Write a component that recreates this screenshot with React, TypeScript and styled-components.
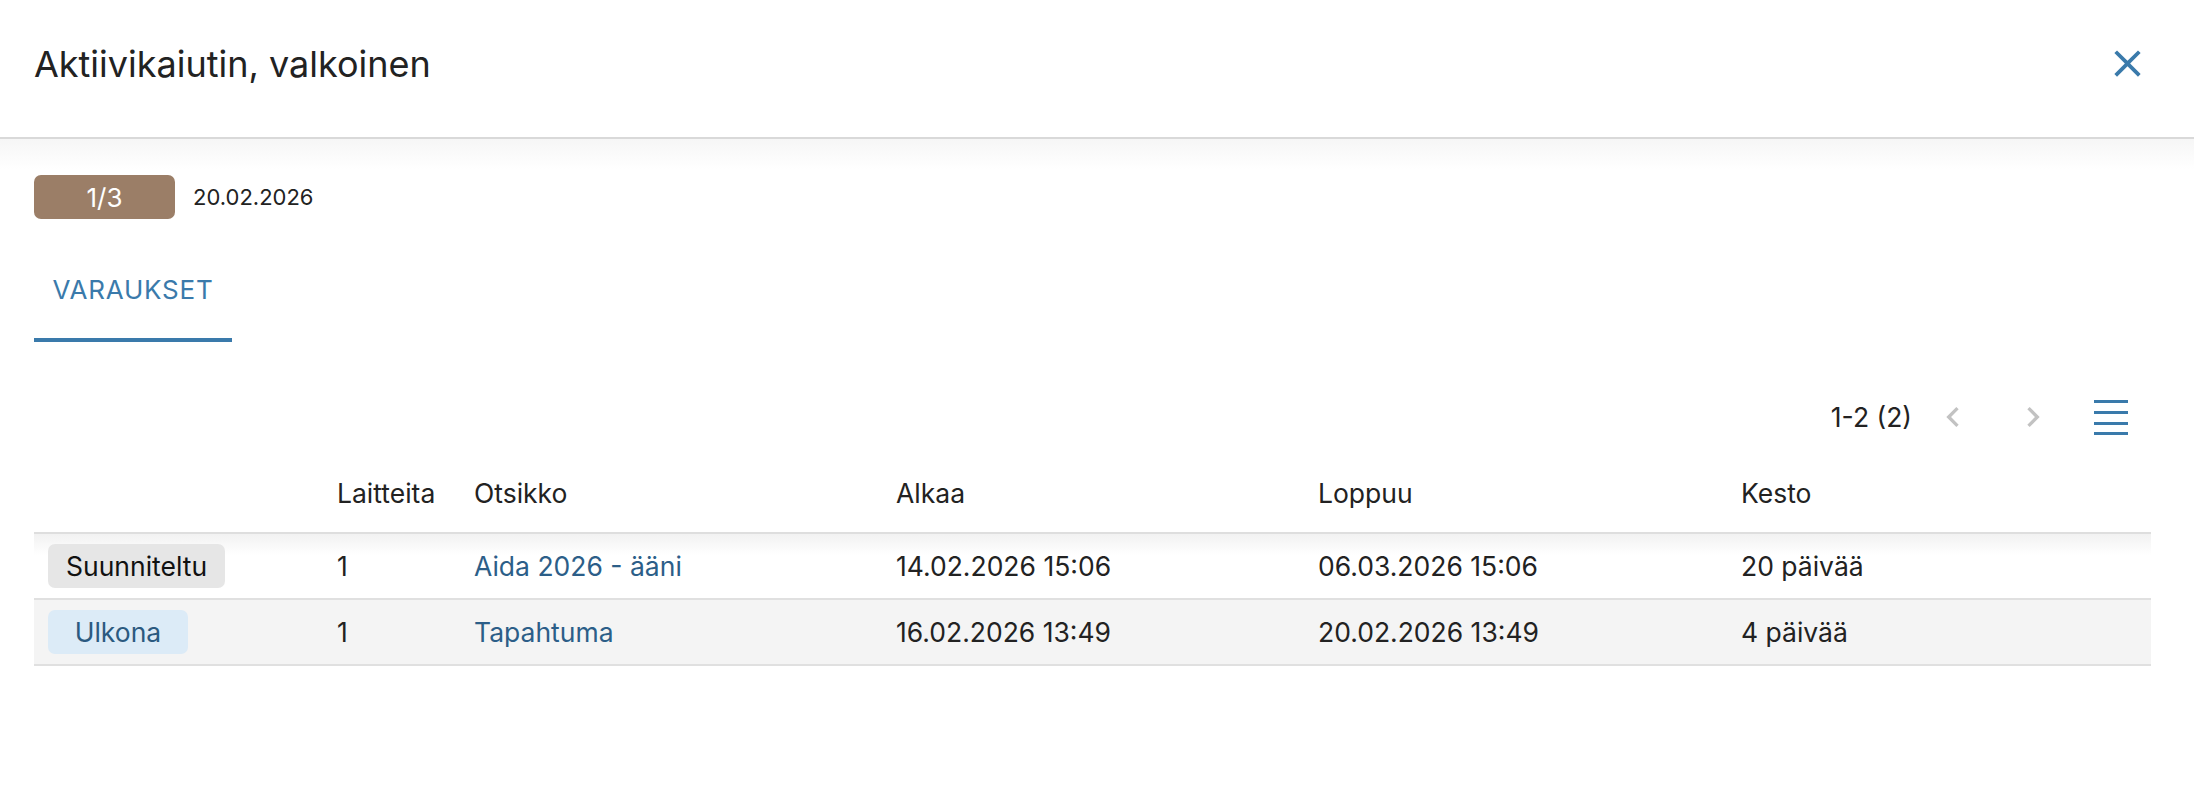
import styled, { createGlobalStyle } from 'styled-components';

const GlobalStyle = createGlobalStyle`
    body {
        margin: 0;
        background: #ffffff;
        font-family: Inter, "Noto Sans", sans-serif;
        color: #222222;
    }
`;

const Page = styled.div`
    width: 100%;
    min-height: 810px;
    background: #ffffff;
`;

const Header = styled.header`
    display: flex;
    align-items: center;
    justify-content: space-between;
    box-sizing: border-box;
    height: 139px;
    padding: 0 43px 10px 34px;
    border-bottom: 2px solid #d9d9d9;
`;

const Title = styled.h1`
    margin: 0;
    font-size: 36px;
    font-weight: 400;
    color: #222222;
`;

const IconButton = styled.button<{ $size: number }>`
    display: flex;
    align-items: center;
    justify-content: center;
    width: ${p => p.$size}px;
    height: ${p => p.$size}px;
    padding: 0;
    border: none;
    background: transparent;
    cursor: pointer;
`;

const Body = styled.main`
    padding: 0 43px 0 34px;
    background: linear-gradient(#f6f6f6, #ffffff 30px) top / 100% 30px no-repeat;
`;

const MetaRow = styled.div`
    display: flex;
    align-items: center;
    gap: 18px;
    padding-top: 36px;
`;

const CountBadge = styled.span`
    display: inline-flex;
    align-items: center;
    justify-content: center;
    width: 141px;
    height: 44px;
    border-radius: 7px;
    background: #9b7e67;
    color: #ffffff;
    font-size: 26px;
`;

const DateText = styled.span`
    font-size: 22px;
    color: #222222;
`;

const Tabs = styled.div`
    display: flex;
    margin-top: 18px;
`;

const Tab = styled.button<{ $active?: boolean }>`
    display: flex;
    align-items: center;
    justify-content: center;
    box-sizing: border-box;
    width: 198px;
    height: 105px;
    padding: 4px 0 0;
    border: none;
    border-bottom: 4px solid ${p => (p.$active ? '#3a7aab' : 'transparent')};
    background: transparent;
    font-family: Inter, "Noto Sans", sans-serif;
    font-size: 26px;
    letter-spacing: 0.03em;
    text-transform: uppercase;
    color: ${p => (p.$active ? '#3a7aab' : '#666666')};
`;

const Toolbar = styled.div`
    display: flex;
    align-items: center;
    justify-content: flex-end;
    height: 60px;
    margin-top: 45px;
    padding-right: 12px;
`;

const RangeText = styled.span`
    font-size: 26.5px;
    color: #222222;
    margin-right: 13px;
`;

const NavGap = styled.span<{ $w: number }>`
    display: inline-block;
    width: ${p => p.$w}px;
`;

const Table = styled.table`
    width: 100%;
    margin-top: 20px;
    border-collapse: collapse;
    table-layout: fixed;
    font-size: 26.5px;
`;

const HeadCell = styled.th`
    padding: 11px 14px 24px;
    line-height: 30px;
    text-align: left;
    font-weight: 400;
    color: #222222;
    border-bottom: 2px solid #dedede;
    white-space: nowrap;
`;

const Row = styled.tr<{ $striped?: boolean; $first?: boolean }>`
    background: ${p =>
        p.$striped
            ? '#f4f4f4'
            : p.$first
            ? 'linear-gradient(#f1f1f1, #ffffff 22px)'
            : '#ffffff'};
`;

const Cell = styled.td`
    height: 66px;
    padding: 0 14px;
    line-height: 30px;
    color: #222222;
    border-bottom: 2px solid #e0e0e0;
    white-space: nowrap;
    box-sizing: border-box;
`;

const LinkText = styled.a`
    color: #2c5e88;
    text-decoration: none;
`;

const StatusChip = styled.span<{ $tone: 'planned' | 'out' }>`
    display: inline-flex;
    align-items: center;
    justify-content: center;
    min-width: 140px;
    height: 44px;
    box-sizing: border-box;
    padding: 0 18px;
    border-radius: 7px;
    font-size: 26.5px;
    background: ${p => (p.$tone === 'planned' ? '#e6e6e6' : '#dcebf7')};
    color: ${p => (p.$tone === 'planned' ? '#111111' : '#2b5a80')};
`;

const CloseIcon = () => (
    <svg width="45" height="45" viewBox="0 0 24 24" fill="#3a7aab">
        <path d="M19 6.41 17.59 5 12 10.59 6.41 5 5 6.41 10.59 12 5 17.59 6.41 19 12 13.41 17.59 19 19 17.59 13.41 12z" />
    </svg>
);

const ChevronLeft = () => (
    <svg width="40" height="40" viewBox="0 0 24 24" fill="#c2c2c2">
        <path d="M15.41 16.59 10.83 12l4.58-4.59L14 6l-6 6 6 6 1.41-1.41z" />
    </svg>
);

const ChevronRight = () => (
    <svg width="40" height="40" viewBox="0 0 24 24" fill="#c2c2c2">
        <path d="M8.59 16.59 13.17 12 8.59 7.41 10 6l6 6-6 6-1.41-1.41z" />
    </svg>
);

const ColumnsIcon = () => (
    <svg width="34" height="36" viewBox="0 0 34 36" fill="#3a7aab">
        <rect x="0" y="1" width="34" height="3" />
        <rect x="0" y="12" width="34" height="3" />
        <rect x="0" y="23" width="34" height="3" />
        <rect x="0" y="33" width="34" height="3" />
    </svg>
);

type Booking = {
    status: 'planned' | 'out';
    statusLabel: string;
    devices: number;
    title: string;
    start: string;
    end: string;
    duration: string;
};

const bookings: Booking[] = [
    {
        status: 'planned',
        statusLabel: 'Suunniteltu',
        devices: 1,
        title: 'Aida 2026 - ääni',
        start: '14.02.2026 15:06',
        end: '06.03.2026 15:06',
        duration: '20 päivää',
    },
    {
        status: 'out',
        statusLabel: 'Ulkona',
        devices: 1,
        title: 'Tapahtuma',
        start: '16.02.2026 13:49',
        end: '20.02.2026 13:49',
        duration: '4 päivää',
    },
];

export default function App() {
    return (
        <>
            <GlobalStyle />
            <Page>
                <Header>
                    <Title>Aktiivikaiutin, valkoinen</Title>
                    <IconButton $size={48} aria-label="Sulje">
                        <CloseIcon />
                    </IconButton>
                </Header>

                <Body>
                    <MetaRow>
                        <CountBadge>1/3</CountBadge>
                        <DateText>20.02.2026</DateText>
                    </MetaRow>

                    <Tabs>
                        <Tab $active>Varaukset</Tab>
                    </Tabs>

                    <Toolbar>
                        <RangeText>1-2 (2)</RangeText>
                        <IconButton $size={56} aria-label="Edellinen">
                            <ChevronLeft />
                        </IconButton>
                        <NavGap $w={24} />
                        <IconButton $size={56} aria-label="Seuraava">
                            <ChevronRight />
                        </IconButton>
                        <NavGap $w={22} />
                        <IconButton $size={56} aria-label="Sarakkeet">
                            <ColumnsIcon />
                        </IconButton>
                    </Toolbar>

                    <Table>
                        <colgroup>
                            <col style={{ width: 289 }} />
                            <col style={{ width: 137 }} />
                            <col style={{ width: 422 }} />
                            <col style={{ width: 422 }} />
                            <col style={{ width: 423 }} />
                            <col />
                        </colgroup>
                        <thead>
                            <tr>
                                <HeadCell></HeadCell>
                                <HeadCell>Laitteita</HeadCell>
                                <HeadCell>Otsikko</HeadCell>
                                <HeadCell>Alkaa</HeadCell>
                                <HeadCell>Loppuu</HeadCell>
                                <HeadCell>Kesto</HeadCell>
                            </tr>
                        </thead>
                        <tbody>
                            {bookings.map((b, i) => (
                                <Row key={b.title} $striped={i % 2 === 1} $first={i === 0}>
                                    <Cell>
                                        <StatusChip $tone={b.status}>{b.statusLabel}</StatusChip>
                                    </Cell>
                                    <Cell>{b.devices}</Cell>
                                    <Cell>
                                        <LinkText href="#">{b.title}</LinkText>
                                    </Cell>
                                    <Cell>{b.start}</Cell>
                                    <Cell>{b.end}</Cell>
                                    <Cell>{b.duration}</Cell>
                                </Row>
                            ))}
                        </tbody>
                    </Table>
                </Body>
            </Page>
        </>
    );
}
